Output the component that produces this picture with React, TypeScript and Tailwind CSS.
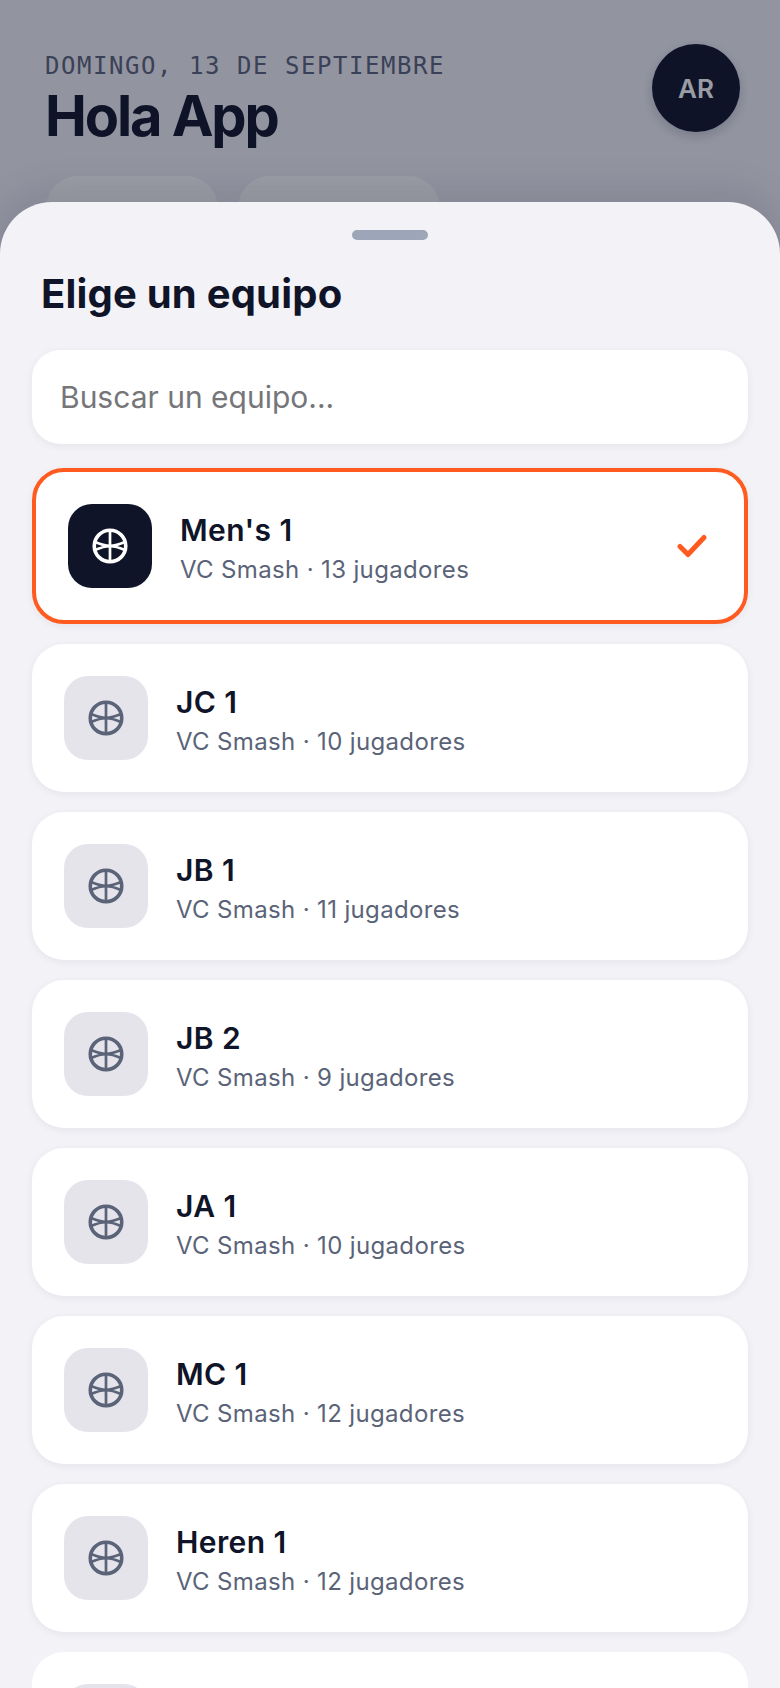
import { useState } from "react";

const teams = [
  { name: "JC 1", players: 10 },
  { name: "JB 1", players: 11 },
  { name: "JB 2", players: 9 },
  { name: "JA 1", players: 10 },
  { name: "MC 1", players: 12 },
  { name: "Heren 1", players: 12 },
];

function BallIcon({ className }: { className: string }) {
  return (
    <svg viewBox="0 0 24 24" fill="none" stroke="currentColor" strokeWidth="2.400" className={className}>
      <circle cx="12" cy="12" r="10.500" />
      <path d="M12 1.500v21" strokeWidth="1.800" />
      <path d="M2.500 9.500c3.500 1.500 6 2.300 9.500 2.300s6-.8 9.500-2.300" strokeWidth="1.700" />
      <path d="M2.500 14.500c3.500-1.500 6-2.300 9.500-2.300s6 .8 9.500 2.300" strokeWidth="1.700" />
    </svg>
  );
}

function TeamRow({ name, players }: { name: string; players: number }) {
  return (
    <div className="flex h-[148px] shrink-0 items-center gap-[28px] rounded-[32px] bg-white px-8 shadow-[0_2px_8px_rgba(15,20,40,0.06)]">
      <div className="flex h-[84px] w-[84px] items-center justify-center rounded-[24px] bg-[#e4e4ea] text-[#5a6378]">
        <BallIcon className="h-9 w-9" />
      </div>
      <div className="pt-1">
        <p className="text-[30px] leading-[38px] font-semibold tracking-[0.4px] text-[#0f1428]">{name}</p>
        <p className="mt-[5px] text-[24px] leading-[32px] tracking-[0.35px] text-[#5a6378]">VC Smash · {players} jugadores</p>
      </div>
    </div>
  );
}

export default function App() {
  const [query, setQuery] = useState("");

  return (
    <div className="relative h-[1688px] w-[780px] overflow-hidden bg-[#f2f2f7] font-['Inter',sans-serif]">
      {/* Page behind the sheet */}
      <div className="px-[46px] pt-11">
        <div className="flex items-start justify-between">
          <div className="-ml-px">
            <p className="font-['DejaVu_Sans_Mono',monospace] text-[24px] leading-[44px] tracking-[1.55px] text-[#5a6378]">
              DOMINGO, 13 DE SEPTIEMBRE
            </p>
            <h1 className="-mt-0.5 text-[56px] leading-[60px] font-bold tracking-[-2.1px] text-[#0f1428]">Hola App</h1>
          </div>
          <div className="mr-[-6px] flex h-[88px] w-[88px] items-center justify-center rounded-full bg-[#0f1428] text-[26px] font-semibold text-white shadow-[0_4px_12px_rgba(15,20,40,0.2)]">
            AR
          </div>
        </div>
        <div className="mt-[30px] flex gap-5">
          <div className="h-20 w-[172px] rounded-[32px] bg-white" />
          <div className="h-20 w-[202px] rounded-[32px] bg-white" />
        </div>
      </div>

      {/* Overlay */}
      <div className="absolute inset-0 bg-[rgba(15,20,40,0.42)]" />

      {/* Bottom sheet */}
      <div className="absolute inset-x-0 top-[202px] bottom-0 flex flex-col overflow-hidden rounded-t-[52px] bg-[#f2f2f7] px-8 shadow-[0_-8px_40px_rgba(15,20,40,0.12)]">
        <div className="mx-auto mt-7 h-[10px] w-[76px] shrink-0 rounded-full bg-[#9ca6b8]" />
        <h2 className="mt-7 ml-[9px] text-[40px] leading-[52px] font-bold tracking-[0.2px] text-[#0f1428]">Elige un equipo</h2>
        <input
          value={query}
          onChange={(e) => setQuery(e.target.value)}
          placeholder="Buscar un equipo..."
          className="mt-[30px] h-[94px] w-full shrink-0 rounded-[28px] bg-white px-7 text-[30px] text-[#0f1428] shadow-[0_2px_8px_rgba(15,20,40,0.06)] outline-none placeholder:text-[#75757a]"
        />
        <div className="mt-[24px] flex flex-col gap-5">
          <div className="flex h-[156px] shrink-0 items-center gap-[28px] rounded-[32px] border-4 border-[#ff5a1f] bg-white px-8 shadow-[0_2px_8px_rgba(15,20,40,0.06)]">
            <div className="flex h-[84px] w-[84px] items-center justify-center rounded-[24px] bg-[#0f1428] text-white">
              <BallIcon className="h-9 w-9" />
            </div>
            <div className="flex-1 pt-1">
              <p className="text-[30px] leading-[38px] font-semibold tracking-[0.4px] text-[#0f1428]">Men's 1</p>
              <p className="mt-[5px] text-[24px] leading-[32px] tracking-[0.35px] text-[#5a6378]">VC Smash · 13 jugadores</p>
            </div>
            <svg viewBox="0 0 30 24" fill="none" stroke="#ff5a1f" strokeWidth="5" strokeLinecap="round" strokeLinejoin="round" className="mr-[5px] h-6 w-[30px]">
              <path d="M3 12.500l8 8L27 3.500" />
            </svg>
          </div>
          {teams.map((t) => (
            <TeamRow key={t.name} name={t.name} players={t.players} />
          ))}
          {/* Next row, only its top edge is on screen */}
          <div className="flex h-[148px] shrink-0 items-center rounded-[32px] bg-white px-8">
            <div className="h-[84px] w-[84px] rounded-[24px] bg-[#e4e4ea]" />
          </div>
        </div>
      </div>
    </div>
  );
}
